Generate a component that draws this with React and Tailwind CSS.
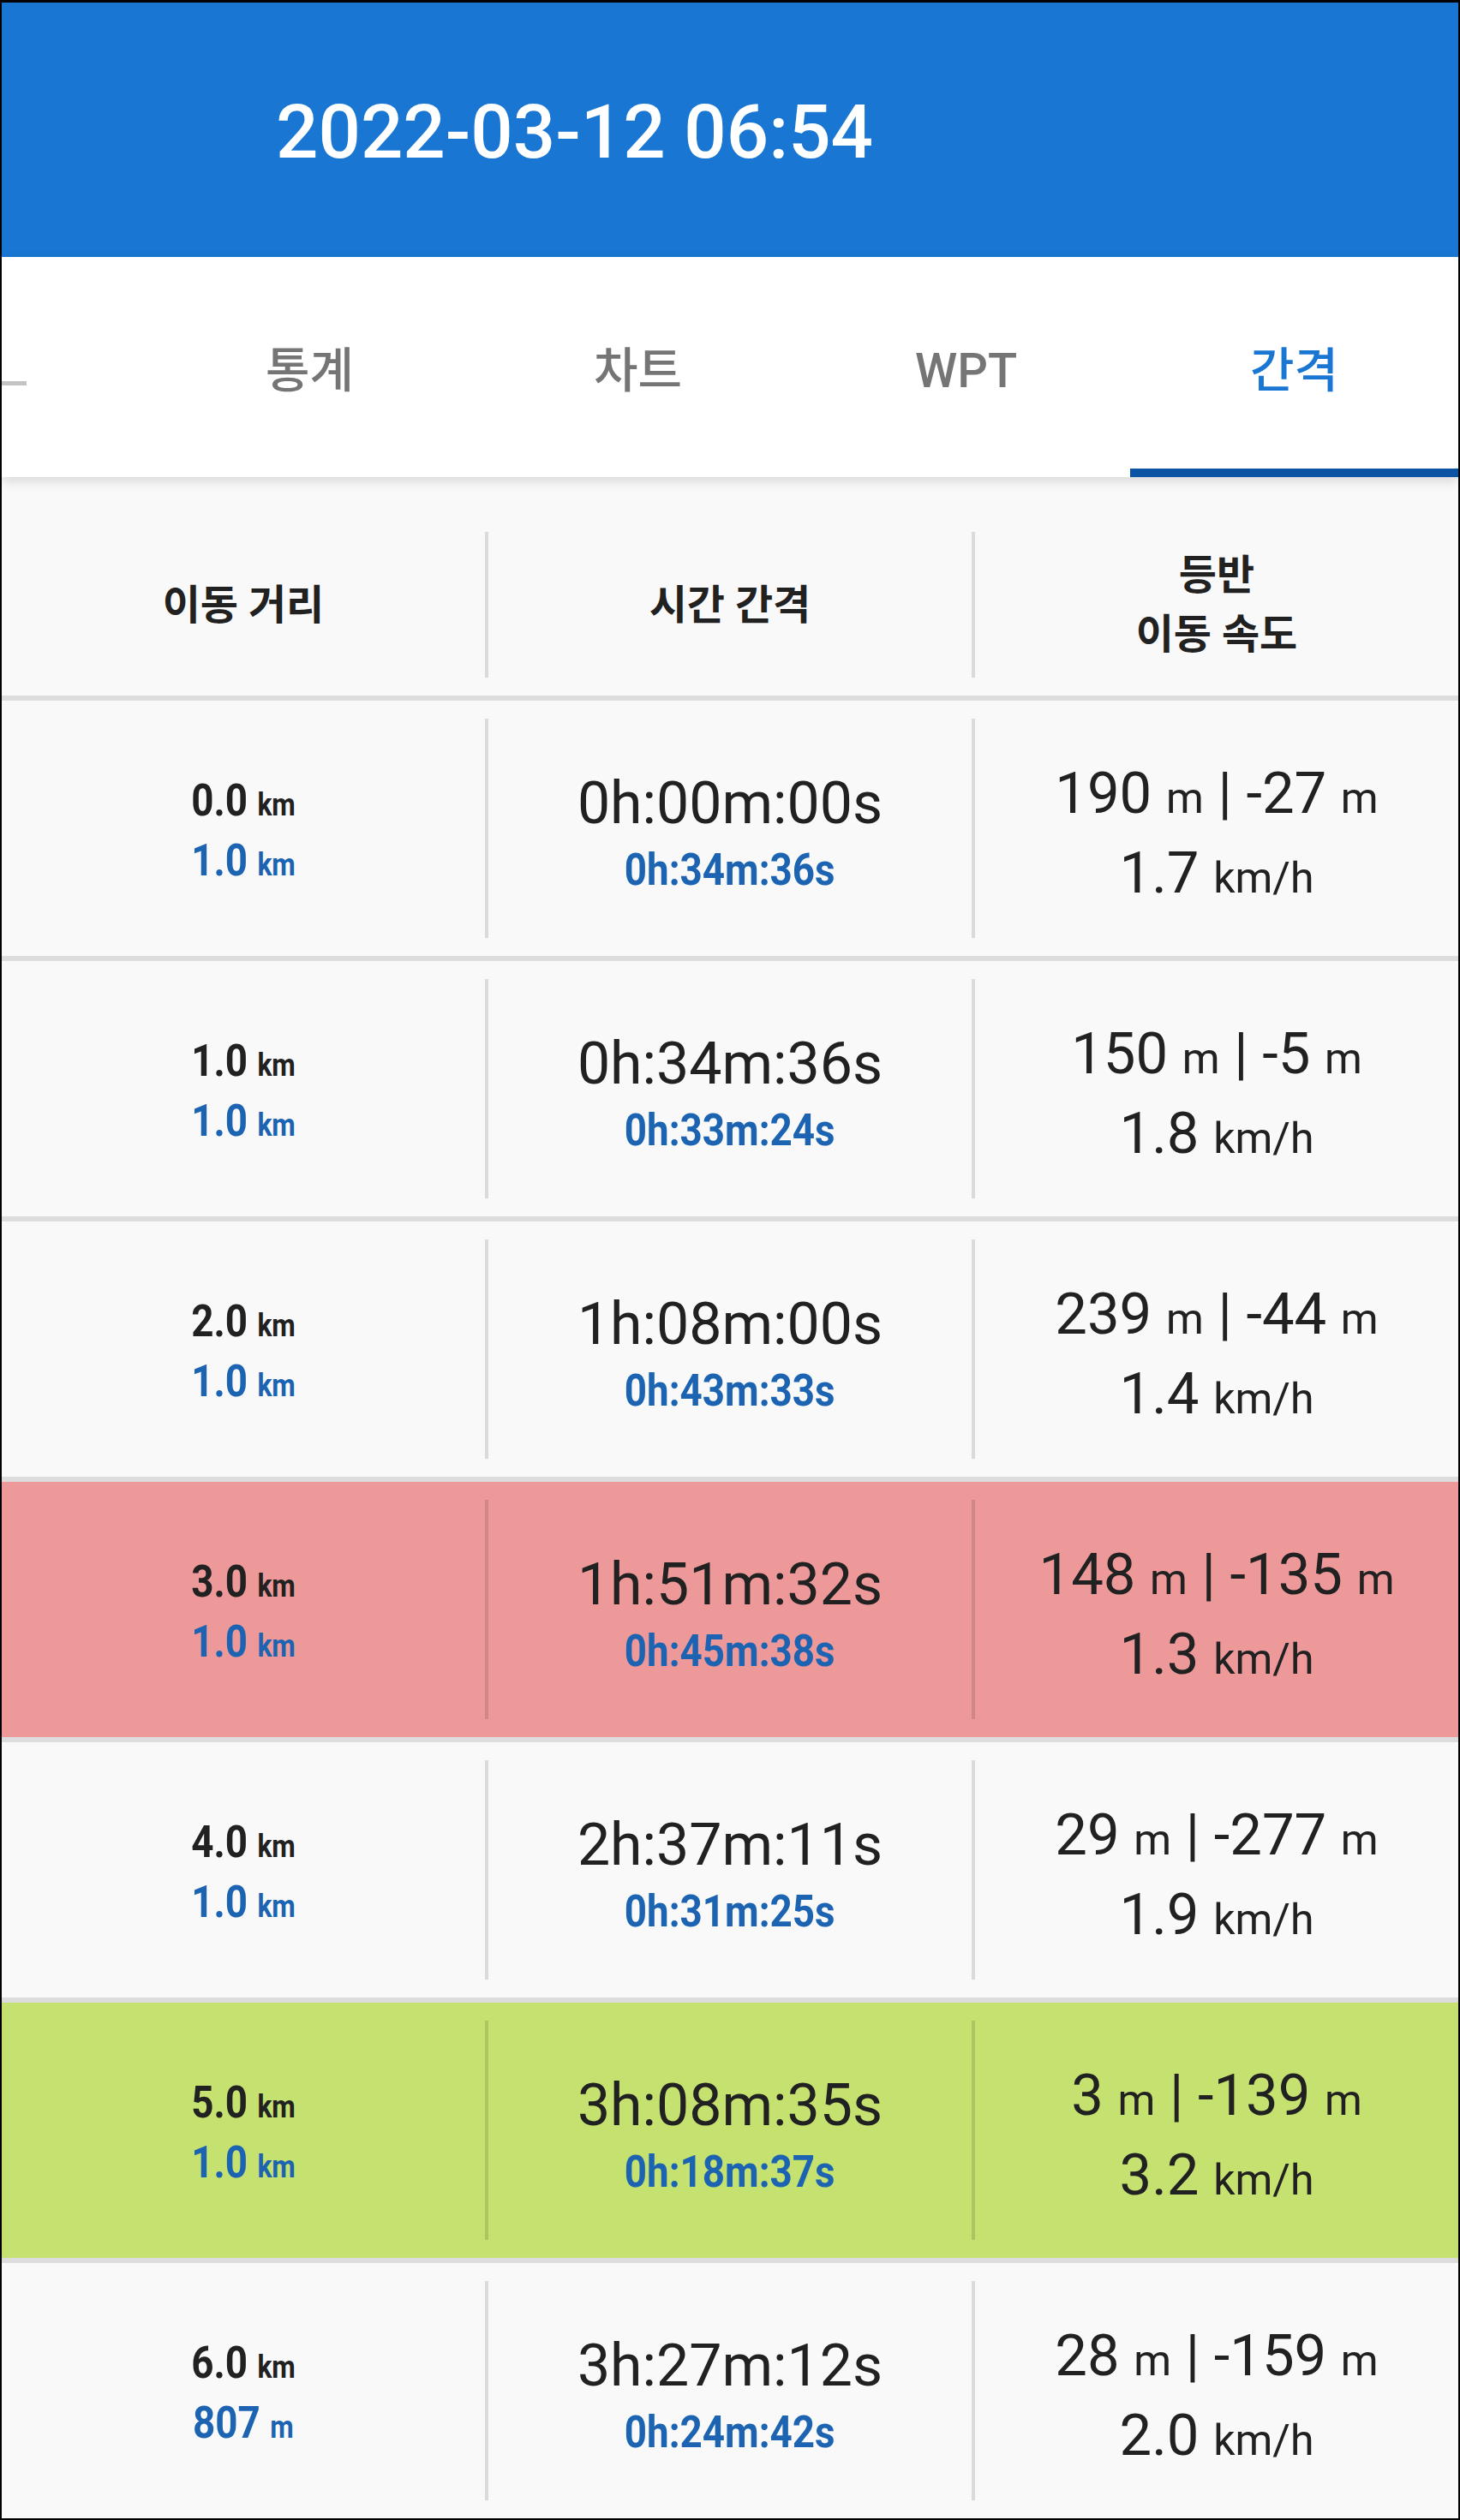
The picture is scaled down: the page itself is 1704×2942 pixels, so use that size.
import React from 'react';

// 구간 기록 데이터
const rows = [
  { dist: '0.0', step: '1.0', unit: 'km', total: '0h:00m:00s', split: '0h:34m:36s', up: '190', down: '-27', speed: '1.7' },
  { dist: '1.0', step: '1.0', unit: 'km', total: '0h:34m:36s', split: '0h:33m:24s', up: '150', down: '-5', speed: '1.8' },
  { dist: '2.0', step: '1.0', unit: 'km', total: '1h:08m:00s', split: '0h:43m:33s', up: '239', down: '-44', speed: '1.4' },
  { dist: '3.0', step: '1.0', unit: 'km', total: '1h:51m:32s', split: '0h:45m:38s', up: '148', down: '-135', speed: '1.3', tone: 'slow' },
  { dist: '4.0', step: '1.0', unit: 'km', total: '2h:37m:11s', split: '0h:31m:25s', up: '29', down: '-277', speed: '1.9' },
  { dist: '5.0', step: '1.0', unit: 'km', total: '3h:08m:35s', split: '0h:18m:37s', up: '3', down: '-139', speed: '3.2', tone: 'fast' },
  { dist: '6.0', step: '807', unit: 'm', total: '3h:27m:12s', split: '0h:24m:42s', up: '28', down: '-159', speed: '2.0' },
];

const tabs = ['통계', '차트', 'WPT', '간격'];

const Divider = () => <div className="w-[4px] my-[21px] bg-black/12 shrink-0" />;

const Row = ({ row }) => {
  const bg = row.tone === 'slow' ? 'bg-[#ed999a]' : row.tone === 'fast' ? 'bg-[#c5e16f]' : 'bg-[#f9f9f9]';
  return (
    <div className={`h-[304px] shrink-0 flex border-b-[6px] border-[#dddddd] ${bg}`}>
      <div className="flex-1 flex flex-col items-center justify-center">
        <div className="scale-x-[0.88] font-bold text-[52px] leading-[76px] text-[#212121]">
          {row.dist} <span className="text-[36px] leading-none">km</span>
        </div>
        <div className="scale-x-[0.88] font-bold text-[52px] leading-[64px] text-[#1c63b2]">
          {row.step} <span className="text-[36px] leading-none">{row.unit}</span>
        </div>
      </div>
      <Divider />
      <div className="flex-1 flex flex-col items-center justify-center">
        <div className="text-[68px] leading-[98px] text-[#212121]">{row.total}</div>
        <div className="scale-x-[0.88] font-bold text-[52px] leading-[58px] text-[#1c63b2]">{row.split}</div>
      </div>
      <Divider />
      <div className="flex-1 flex flex-col items-center justify-center text-[#212121]">
        <div className="text-[67px] leading-[105px] whitespace-nowrap">
          {row.up} <span className="text-[50px] leading-none">m</span> | {row.down} <span className="text-[50px] leading-none">m</span>
        </div>
        <div className="text-[67px] leading-[81px] whitespace-nowrap">
          {row.speed} <span className="text-[50px] leading-none">km/h</span>
        </div>
      </div>
    </div>
  );
};

export default function App() {
  return (
    <div className="w-[1704px] h-[2942px] overflow-hidden border-x-2 border-t-[3px] border-b-2 border-black bg-[#f9f9f9] flex flex-col font-[family-name:Roboto,'Noto_Sans_CJK_KR',sans-serif]">
      <header className="h-[297px] shrink-0 bg-[#1976d2] flex items-center pl-[320px] pt-[6px]">
        <h1 className="text-[87px] font-medium leading-none text-white">2022-03-12 06:54</h1>
      </header>

      <nav className="h-[257px] shrink-0 bg-white flex relative z-10 shadow-[0_5px_12px_rgba(0,0,0,0.13)]">
        <div className="w-[168px] shrink-0 pt-[145px]">
          <div className="w-[29px] h-[5px] bg-[#c4c4c4]" />
        </div>
        {tabs.map((t, i) => {
          const active = i === tabs.length - 1;
          return (
            <div key={t} className="w-[383px] shrink-0 relative flex items-center justify-center pt-[8px]">
              <span className={`text-[56px] font-medium ${active ? 'text-[#1976d2]' : 'text-[#757575]'}`}>{t}</span>
              {active && <div className="absolute left-0 right-0 bottom-0 h-[10px] bg-[#0d53a4]" />}
            </div>
          );
        })}
      </nav>

      <div className="h-[43px] shrink-0" />

      <div className="h-[218px] shrink-0 flex border-b-[6px] border-[#dddddd] text-[48px] font-bold leading-[69px] text-[#212121] text-center">
        <div className="flex-1 flex items-center justify-center">이동 거리</div>
        <Divider />
        <div className="flex-1 flex items-center justify-center">시간 간격</div>
        <Divider />
        <div className="flex-1 flex flex-col items-center justify-center">
          <div>등반</div>
          <div>이동 속도</div>
        </div>
      </div>

      {rows.map((r) => (
        <Row key={r.dist} row={r} />
      ))}
    </div>
  );
}
